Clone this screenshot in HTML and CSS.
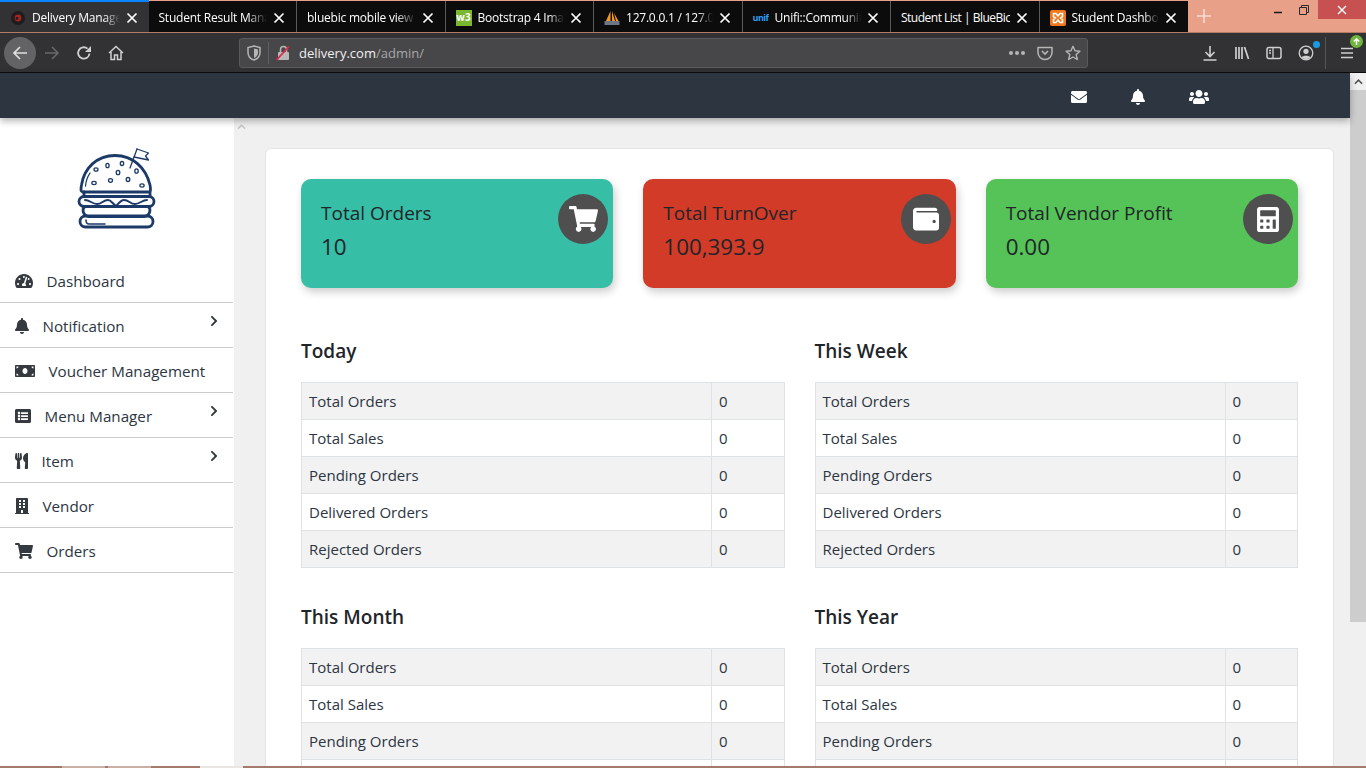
FILE: index.html
```html
<!DOCTYPE html>
<html lang="en">
<head>
<meta charset="utf-8">
<title>Delivery Management</title>
<link rel="stylesheet" href="styles.css">
</head>
<body>
<svg class="defs" aria-hidden="true">
  <symbol id="i-bell" viewBox="0 0 448 512"><path d="M224 512c35.32 0 63.97-28.65 63.97-64H160.03c0 35.35 28.65 64 63.97 64zm215.39-149.71c-19.32-20.76-55.47-51.99-55.47-154.29 0-77.7-54.48-139.9-127.94-155.16V32c0-17.67-14.32-32-31.98-32s-31.98 14.33-31.98 32v20.84C118.56 68.1 64.08 130.3 64.08 208c0 102.3-36.15 133.53-55.47 154.29-6 6.45-8.66 14.16-8.61 21.71.11 16.4 12.98 32 32.1 32h383.8c19.12 0 32-15.6 32.1-32 .05-7.55-2.61-15.27-8.61-21.71z"/></symbol>
  <symbol id="i-cart" viewBox="0 0 576 512"><path d="M528.12 301.319l47.273-208C578.806 78.301 567.391 64 551.99 64H159.208l-9.166-44.81C147.758 8.021 137.93 0 126.529 0H24C10.745 0 0 10.745 0 24v16c0 13.255 10.745 24 24 24h69.883l70.248 343.435C147.325 417.1 136 435.222 136 456c0 30.928 25.072 56 56 56s56-25.072 56-56c0-15.674-6.447-29.835-16.824-40h209.647C430.447 426.165 424 440.326 424 456c0 30.928 25.072 56 56 56s56-25.072 56-56c0-22.172-12.888-41.332-31.579-50.405l5.517-24.276c3.413-15.018-8.002-29.319-23.403-29.319H218.117l-6.545-32h293.145c11.206 0 20.92-7.754 23.403-18.681z"/></symbol>
  <symbol id="i-chev" viewBox="0 0 320 512"><path d="M285.476 272.971L91.132 467.314c-9.373 9.373-24.569 9.373-33.941 0l-22.667-22.667c-9.357-9.357-9.375-24.522-.04-33.901L188.505 256 34.484 101.255c-9.335-9.379-9.317-24.544.04-33.901l22.667-22.667c9.373-9.373 24.569-9.373 33.941 0L285.475 239.03c9.373 9.372 9.373 24.568.001 33.941z"/></symbol>
  <symbol id="i-env" viewBox="0 0 512 512"><path d="M502.3 190.8c3.9-3.1 9.7-.2 9.7 4.7V400c0 26.5-21.5 48-48 48H48c-26.5 0-48-21.5-48-48V195.6c0-5 5.7-7.8 9.7-4.7 22.4 17.4 52.1 39.5 154.1 113.6 21.1 15.4 56.7 47.8 92.2 47.6 35.7.3 72-32.8 92.3-47.6 102-74.1 131.6-96.3 154-113.7zM256 320c23.2.4 56.6-29.2 73.4-41.4 132.7-96.3 142.8-104.7 173.4-128.7 5.8-4.5 9.2-11.5 9.2-18.9v-19c0-26.5-21.5-48-48-48H48C21.5 64 0 85.5 0 112v19c0 7.4 3.4 14.3 9.2 18.9 30.6 23.9 40.7 32.4 173.4 128.7 16.8 12.2 50.2 41.8 73.4 41.4z"/></symbol>
  <symbol id="i-users" viewBox="0 0 640 512"><path d="M96 224c35.3 0 64-28.7 64-64s-28.7-64-64-64-64 28.7-64 64 28.7 64 64 64zm448 0c35.3 0 64-28.7 64-64s-28.7-64-64-64-64 28.7-64 64 28.7 64 64 64zm32 32h-64c-17.6 0-33.5 7.1-45.1 18.6 40.3 22.1 68.9 62 75.1 109.4h66c17.7 0 32-14.3 32-32v-32c0-35.3-28.7-64-64-64zm-256 0c61.9 0 112-50.1 112-112S381.9 32 320 32 208 82.1 208 144s50.1 112 112 112zm76.8 32h-8.3c-20.8 10-43.9 16-68.5 16s-47.6-6-68.5-16h-8.3C179.6 288 128 339.6 128 403.2V432c0 26.5 21.5 48 48 48h288c26.5 0 48-21.5 48-48v-28.8c0-63.6-51.6-115.2-115.2-115.2zm-223.7-13.4C161.5 263.1 145.6 256 128 256H64c-35.3 0-64 28.7-64 64v32c0 17.7 14.3 32 32 32h65.9c6.3-47.4 34.9-87.3 75.2-109.4z"/></symbol>
  <symbol id="i-wallet" viewBox="0 0 512 512"><path d="M461.2 128H80c-8.84 0-16-7.16-16-16s7.16-16 16-16h384c8.84 0 16-7.16 16-16 0-26.51-21.49-48-48-48H64C28.65 32 0 60.65 0 96v320c0 35.35 28.65 64 64 64h397.2c28.02 0 50.8-21.53 50.8-48V176c0-26.47-22.78-48-50.8-48zM416 336c-17.67 0-32-14.33-32-32s14.33-32 32-32 32 14.33 32 32-14.33 32-32 32z"/></symbol>
  <symbol id="i-calc" viewBox="0 0 448 512"><path d="M400 0H48C22.4 0 0 22.4 0 48v416c0 25.6 22.4 48 48 48h352c25.6 0 48-22.4 48-48V48c0-25.6-22.4-48-48-48zM128 435c0 6.4-6.4 12.8-12.8 12.8H76.8c-6.4 0-12.8-6.4-12.8-12.8v-38.4c0-6.4 6.4-12.8 12.8-12.8h38.4c6.4 0 12.8 6.4 12.8 12.8V435zm0-128c0 6.4-6.4 12.8-12.8 12.8H76.8c-6.4 0-12.8-6.4-12.8-12.8v-38.4c0-6.4 6.4-12.8 12.8-12.8h38.4c6.4 0 12.8 6.4 12.8 12.8V307zm128 128c0 6.4-6.4 12.8-12.8 12.8h-38.4c-6.4 0-12.8-6.4-12.8-12.8v-38.4c0-6.4 6.4-12.8 12.8-12.8h38.4c6.4 0 12.8 6.4 12.8 12.8V435zm0-128c0 6.4-6.4 12.8-12.8 12.8h-38.4c-6.4 0-12.8-6.4-12.8-12.8v-38.4c0-6.4 6.4-12.8 12.8-12.8h38.4c6.4 0 12.8 6.4 12.8 12.8V307zm128 128c0 6.4-6.4 12.8-12.8 12.8h-38.4c-6.4 0-12.8-6.4-12.8-12.8V268.8c0-6.4 6.4-12.8 12.8-12.8h38.4c6.4 0 12.8 6.4 12.8 12.8V435zm0-256c0 6.4-6.4 12.8-12.8 12.8H76.8c-6.4 0-12.8-6.4-12.8-12.8V76.8C64 70.4 70.4 64 76.8 64h294.4c6.4 0 12.8 6.4 12.8 12.8V179z"/></symbol>
  <symbol id="i-tach" viewBox="0 0 576 512"><path d="M288 32C128.94 32 0 160.94 0 320c0 52.8 14.25 102.26 39.06 144.8 5.61 9.62 16.3 15.2 27.44 15.2h443c11.14 0 21.83-5.58 27.44-15.2C561.75 422.26 576 372.8 576 320c0-159.06-128.94-288-288-288zm0 64c14.71 0 26.58 10.13 30.32 23.65-1.11 2.26-2.64 4.23-3.45 6.67l-9.22 27.67c-5.13 3.49-10.97 6.01-17.64 6.01-17.67 0-32-14.33-32-32S270.33 96 288 96zM96 384c-17.67 0-32-14.33-32-32s14.33-32 32-32 32 14.33 32 32-14.33 32-32 32zm48-160c-17.67 0-32-14.33-32-32s14.33-32 32-32 32 14.33 32 32-14.33 32-32 32zm246.77-72.41l-61.33 184C343.13 347.33 352 364.54 352 384c0 11.72-3.38 22.55-8.88 32H232.88c-5.5-9.45-8.88-20.28-8.88-32 0-33.94 26.5-61.43 59.9-63.59l61.34-184.01c4.17-12.56 17.73-19.45 30.36-15.17 12.57 4.19 19.35 17.79 15.17 30.36zm14.66 57.2l15.52-46.55c3.47-1.29 7.13-2.23 11.05-2.23 17.67 0 32 14.33 32 32s-14.33 32-32 32c-11.38-.01-20.89-6.28-26.57-15.22zM480 384c-17.67 0-32-14.33-32-32s14.33-32 32-32 32 14.33 32 32-14.33 32-32 32z"/></symbol>
  <symbol id="i-money" viewBox="0 0 640 512"><path d="M608 64H32C14.33 64 0 78.33 0 96v320c0 17.67 14.33 32 32 32h576c17.67 0 32-14.33 32-32V96c0-17.67-14.33-32-32-32zM48 400v-64c35.35 0 64 28.65 64 64H48zm0-224v-64h64c0 35.35-28.65 64-64 64zm272 176c-44.19 0-80-42.99-80-96 0-53.02 35.82-96 80-96s80 42.98 80 96c0 53.03-35.83 96-80 96zm272 48h-64c0-35.35 28.65-64 64-64v64zm0-224c-35.35 0-64-28.65-64-64h64v64z"/></symbol>
  <symbol id="i-list" viewBox="0 0 512 512"><path d="M464 480H48c-26.51 0-48-21.49-48-48V80c0-26.51 21.49-48 48-48h416c26.51 0 48 21.49 48 48v352c0 26.51-21.49 48-48 48zM128 120c-22.091 0-40 17.909-40 40s17.909 40 40 40 40-17.909 40-40-17.909-40-40-40zm0 96c-22.091 0-40 17.909-40 40s17.909 40 40 40 40-17.909 40-40-17.909-40-40-40zm0 96c-22.091 0-40 17.909-40 40s17.909 40 40 40 40-17.909 40-40-17.909-40-40-40zm288-136v-32c0-6.627-5.373-12-12-12H204c-6.627 0-12 5.373-12 12v32c0 6.627 5.373 12 12 12h200c6.627 0 12-5.373 12-12zm0 96v-32c0-6.627-5.373-12-12-12H204c-6.627 0-12 5.373-12 12v32c0 6.627 5.373 12 12 12h200c6.627 0 12-5.373 12-12zm0 96v-32c0-6.627-5.373-12-12-12H204c-6.627 0-12 5.373-12 12v32c0 6.627 5.373 12 12 12h200c6.627 0 12-5.373 12-12z"/></symbol>
  <symbol id="i-uten" viewBox="0 0 416 512"><path d="M207.9 15.2c.8 4.7 16.1 94.5 16.1 128.8 0 52.3-27.8 89.6-68.9 104.6L168 486.7c.7 13.7-10.2 25.3-24 25.3H80c-13.7 0-24.7-11.5-24-25.3l12.9-238.1C27.7 233.6 0 196.2 0 144 0 109.6 15.3 19.9 16.1 15.2 19.3-5.1 61.4-5.4 64 16.3v141.2c1.3 3.4 15.1 3.2 16 0 1.4-25.3 7.9-139.2 8-141.8 3.3-20.8 44.7-20.8 47.9 0 .2 2.7 6.6 116.5 8 141.8.9 3.2 14.8 3.4 16 0V16.3c2.6-21.6 44.8-21.4 48-1.1zm119.2 285.7l-15 185.1c-1.2 14 9.9 26 23.9 26h56c13.3 0 24-10.7 24-24V24c0-13.2-10.7-24-24-24-82.5 0-221.4 178.5-64.9 300.9z"/></symbol>
  <symbol id="i-bldg" viewBox="0 0 448 512"><path d="M436 480h-20V24c0-13.255-10.745-24-24-24H56C42.745 0 32 10.745 32 24v456H12c-6.627 0-12 5.373-12 12v20h448v-20c0-6.627-5.373-12-12-12zM128 76c0-6.627 5.373-12 12-12h40c6.627 0 12 5.373 12 12v40c0 6.627-5.373 12-12 12h-40c-6.627 0-12-5.373-12-12V76zm0 96c0-6.627 5.373-12 12-12h40c6.627 0 12 5.373 12 12v40c0 6.627-5.373 12-12 12h-40c-6.627 0-12-5.373-12-12v-40zm52 148h-40c-6.627 0-12-5.373-12-12v-40c0-6.627 5.373-12 12-12h40c6.627 0 12 5.373 12 12v40c0 6.627-5.373 12-12 12zm76 160h-64v-84c0-6.627 5.373-12 12-12h40c6.627 0 12 5.373 12 12v84zm64-172c0 6.627-5.373 12-12 12h-40c-6.627 0-12-5.373-12-12v-40c0-6.627 5.373-12 12-12h40c6.627 0 12 5.373 12 12v40zm0-96c0 6.627-5.373 12-12 12h-40c-6.627 0-12-5.373-12-12v-40c0-6.627 5.373-12 12-12h40c6.627 0 12 5.373 12 12v40zm0-96c0 6.627-5.373 12-12 12h-40c-6.627 0-12-5.373-12-12V76c0-6.627 5.373-12 12-12h40c6.627 0 12 5.373 12 12v40z"/></symbol>
  <symbol id="i-x" viewBox="0 0 12 12"><path d="M1.5 1.5l9 9M10.5 1.5l-9 9" fill="none" stroke="currentColor" stroke-width="1.7"/></symbol>
</svg>

<div class="tabstrip">
  <div class="tab active">
    <svg class="fav" viewBox="0 0 16 16"><circle cx="8" cy="8" r="7" fill="#1d1d1f"/><circle cx="8" cy="8" r="3.4" fill="#a3231f"/><circle cx="7" cy="8.4" r="1.3" fill="#1d1d1f"/></svg>
    <span class="tab-title">Delivery Management</span>
    <svg class="tab-x"><use href="#i-x"/></svg>
  </div>
  <div class="tab">
    <span class="tab-title">Student Result Management</span>
    <svg class="tab-x"><use href="#i-x"/></svg>
  </div>
  <div class="tab">
    <span class="tab-title">bluebic mobile view - Google</span>
    <svg class="tab-x"><use href="#i-x"/></svg>
  </div>
  <div class="tab">
    <span class="fav fav-w3">w3</span>
    <span class="tab-title">Bootstrap 4 Images</span>
    <svg class="tab-x"><use href="#i-x"/></svg>
  </div>
  <div class="tab">
    <svg class="fav" viewBox="0 0 16 16"><path d="M6.500 1L2 11h4.500zM8 1v10h3zM10 3l4.500 8H12z" fill="#f29a1f"/><rect x="0.500" y="11" width="15" height="4" fill="#6d7685"/></svg>
    <span class="tab-title">127.0.0.1 / 127.0.0.1</span>
    <svg class="tab-x"><use href="#i-x"/></svg>
  </div>
  <div class="tab">
    <span class="fav fav-uni">unif<b>i</b></span>
    <span class="tab-title">Unifi::Community</span>
    <svg class="tab-x"><use href="#i-x"/></svg>
  </div>
  <div class="tab">
    <span class="tab-title tab-full">Student List | BlueBic</span>
    <svg class="tab-x"><use href="#i-x"/></svg>
  </div>
  <div class="tab">
    <svg class="fav" viewBox="0 0 16 16"><rect width="16" height="16" rx="2" fill="#f2781f"/><path d="M3.500 3.500h2.500l2 2.500 2-2.500h2.500v3L10.500 8l2 1.500v3H10L8 10l-2 2.500H3.500v-3L5.500 8l-2-1.500z" fill="none" stroke="#fff" stroke-width="1.500"/></svg>
    <span class="tab-title">Student Dashboard</span>
    <svg class="tab-x"><use href="#i-x"/></svg>
  </div>
  <div class="new-tab">
    <svg viewBox="0 0 14 14"><path d="M7 0v14M0 7h14" stroke="#f6dcd2" stroke-width="1.600"/></svg>
  </div>
  <div class="winctl">
    <span class="win-btn"><svg viewBox="0 0 10 10"><path d="M1 7.500h8" stroke="#1b1b1b" stroke-width="1.500"/></svg></span>
    <span class="win-btn"><svg viewBox="0 0 10 10"><path d="M.5 2.500h7v7h-7zM2.500 2.500v-2h7v7h-2" fill="none" stroke="#2a2a2a"/></svg></span>
    <span class="win-close"><svg viewBox="0 0 10 10"><path d="M1 1l8 8M9 1l-8 8" stroke="#fff" stroke-width="1.400"/></svg></span>
  </div>
</div>

<div class="toolbar">
  <div class="nav-btn back"><svg viewBox="0 0 16 16"><path d="M15 8H2M8 2L2 8l6 6" fill="none" stroke="#e0e0e0" stroke-width="1.700"/></svg></div>
  <div class="nav-btn"><svg viewBox="0 0 16 16"><path d="M1 8h13M8 2l6 6-6 6" fill="none" stroke="#69696b" stroke-width="1.500"/></svg></div>
  <div class="nav-btn"><svg viewBox="0 0 16 16"><path d="M13.500 8.500A5.700 5.700 0 1 1 11.500 3.600" fill="none" stroke="#d0d0d0" stroke-width="1.800"/><path d="M15 1v6H9z" fill="#d0d0d0"/></svg></div>
  <div class="nav-btn"><svg viewBox="0 0 16 16"><path d="M1 8l7-6.500L15 8M3 7v7.500h3.500V10h3v4.500H13V7" fill="none" stroke="#d0d0d0" stroke-width="1.500"/></svg></div>
  <div class="urlbar">
    <svg class="url-ic shield" viewBox="0 0 16 16"><path d="M8 1l6 1.500v5c0 4-3 6.500-6 7.500-3-1-6-3.500-6-7.500v-5z" fill="none" stroke="#b5b5b5" stroke-width="1.500"/><path d="M8 3.500v9.500c2-1 4-2.500 4-5.500V4.500z" fill="#b5b5b5"/></svg>
    <span class="url-sep"></span>
    <svg class="url-ic lock" viewBox="0 0 16 16"><rect x="3" y="7" width="11" height="8" rx="1" fill="#b8b8b8"/><path d="M5.500 7V4.500a3 3 0 0 1 6 0V7" fill="none" stroke="#b8b8b8" stroke-width="1.500"/><path d="M1.500 15L14 1.500" stroke="#e0264a" stroke-width="1.800"/></svg>
    <span class="url-text">delivery.com<span class="url-path">/admin/</span></span>
    <span class="url-dots"><i></i><i></i><i></i></span>
    <svg class="url-ic pocket" viewBox="0 0 16 16"><path d="M1 2.500h14v5a7 7 0 0 1-14 0z" fill="none" stroke="#b5b5b5" stroke-width="1.500" stroke-linejoin="round"/><path d="M5 6l3 3 3-3" fill="none" stroke="#b5b5b5" stroke-width="1.600"/></svg>
    <svg class="url-ic star" viewBox="0 0 16 16"><path d="M8 1.300l2 4.500 4.900.5-3.700 3.300 1.100 4.900L8 12l-4.300 2.500 1.100-4.900L1.100 6.300 6 5.800z" fill="none" stroke="#b5b5b5" stroke-width="1.400" stroke-linejoin="round"/></svg>
  </div>
  <div class="tools">
    <svg class="tool" viewBox="0 0 16 16"><path d="M8 1v10M3.500 7L8 11.500 12.500 7M1.500 15h13" fill="none" stroke="#cfcfcf" stroke-width="1.600"/></svg>
    <svg class="tool" viewBox="0 0 16 16"><path d="M2 2v12M5 2v12M8 2v12M10.500 2l4 12" fill="none" stroke="#cfcfcf" stroke-width="1.700"/></svg>
    <svg class="tool" viewBox="0 0 16 16"><rect x="1" y="2.500" width="14" height="11" rx="2" fill="none" stroke="#cfcfcf" stroke-width="1.500"/><path d="M7 2.500v11M3 5.500h2M3 8h2" stroke="#cfcfcf" stroke-width="1.300"/></svg>
    <span class="acct">
      <svg class="tool" viewBox="0 0 16 16"><circle cx="8" cy="8" r="6.800" fill="none" stroke="#cfcfcf" stroke-width="1.300"/><circle cx="8" cy="6.300" r="2.600" fill="#cfcfcf"/><path d="M3.500 12.500c1-2.500 8-2.500 9 0L8 14.500z" fill="#cfcfcf"/></svg>
      <span class="acct-dot"></span>
    </span>
    <span class="tool-sep"></span>
    <span class="menu">
      <svg class="tool" viewBox="0 0 16 16"><path d="M2 3.500h12M2 8h12M2 12.500h12" stroke="#cfcfcf" stroke-width="1.500"/></svg>
      <span class="menu-badge"><svg viewBox="0 0 10 10"><path d="M5 9V2M2 5l3-3 3 3" fill="none" stroke="#fff" stroke-width="1.700"/></svg></span>
    </span>
  </div>
</div>

<div class="viewport">
  <div class="page">
    <header class="topnav">
      <svg class="nav-ic env"><use href="#i-env"/></svg>
      <svg class="nav-ic bell"><use href="#i-bell"/></svg>
      <svg class="nav-ic users"><use href="#i-users"/></svg>
    </header>
    <div class="body-row">
      <aside class="sidebar">
        <div class="logo">
          <svg class="burger" viewBox="0 0 82 84">
            <g fill="none" stroke="#1c3a68" stroke-width="2.800" stroke-linecap="round" stroke-linejoin="round">
              <path d="M5 44c0-2 0-3 .5-5C8 22 21 9.500 39 9.500S70 22 74 39c.500 2 .500 3 .500 5 0 1-1 2-2 2H7c-1 0-2-1-2-2z"/>
              <path d="M8 46v4M74 46v4"/>
              <rect x="3" y="50.500" width="75" height="10" rx="5"/>
              <path d="M9 60.500c-3 2-3 9 4 10h55c7-1 7-8 4-10"/>
              <rect x="4" y="70" width="73" height="11" rx="5.500"/>
              <path d="M9 54c5 0 7 4 12 4s6-4 11-4c3 0 4 3 8 6 3-3 5-6 8-6 5 0 6 4 11 4s7-4 12-4" stroke-width="2"/>
            </g>
            <g fill="none" stroke="#1c3a68" stroke-width="1.300" stroke-linecap="round" stroke-linejoin="round">
              <path d="M54 22L61 3"/>
              <path d="M61 3l11.500 4-3 3 3 4L58 11"/>
              <path d="M9.500 40c.500-6 2.500-10 4.500-13"/>
              <path d="M10 74c0 3 1 4 3 4h16" stroke-width="1.600"/>
              <ellipse cx="20" cy="23.500" rx="2" ry="1.700"/>
              <ellipse cx="31.500" cy="19.500" rx="1.600" ry="2.200"/>
              <ellipse cx="46" cy="17.500" rx="1.700" ry="2"/>
              <ellipse cx="42" cy="26.500" rx="1.800" ry="2.200"/>
              <ellipse cx="60.500" cy="25" rx="1.700" ry="2.200"/>
              <ellipse cx="18" cy="37" rx="2.200" ry="1.600"/>
              <ellipse cx="34.500" cy="34.500" rx="2" ry="1.800"/>
              <ellipse cx="52" cy="33.500" rx="1.800" ry="2"/>
              <ellipse cx="66" cy="39.500" rx="2.100" ry="1.600"/>
            </g>
          </svg>
        </div>
        <nav class="side-nav">
          <a class="side-item"><svg class="si si-18"><use href="#i-tach"/></svg><span>Dashboard</span></a>
          <a class="side-item"><svg class="si si-14"><use href="#i-bell"/></svg><span>Notification</span><svg class="chev"><use href="#i-chev"/></svg></a>
          <a class="side-item"><svg class="si si-20"><use href="#i-money"/></svg><span>Voucher Management</span></a>
          <a class="side-item"><svg class="si si-16"><use href="#i-list"/></svg><span>Menu Manager</span><svg class="chev"><use href="#i-chev"/></svg></a>
          <a class="side-item"><svg class="si si-13"><use href="#i-uten"/></svg><span>Item</span><svg class="chev"><use href="#i-chev"/></svg></a>
          <a class="side-item"><svg class="si si-14"><use href="#i-bldg"/></svg><span>Vendor</span></a>
          <a class="side-item"><svg class="si si-18"><use href="#i-cart"/></svg><span>Orders</span></a>
        </nav>
      </aside>
      <main class="main">
        <div class="main-arrow"><svg viewBox="0 0 10 6"><path d="M1 5l4-4 4 4" fill="none" stroke="#c4c4c4" stroke-width="1.600"/></svg></div>
        <div class="panel">
          <div class="stats">
            <div class="stat teal">
              <div class="stat-label">Total Orders</div>
              <div class="stat-value">10</div>
              <span class="stat-ic"><svg class="ic-cart"><use href="#i-cart"/></svg></span>
            </div>
            <div class="stat red">
              <div class="stat-label">Total TurnOver</div>
              <div class="stat-value">100,393.9</div>
              <span class="stat-ic"><svg class="ic-wallet"><use href="#i-wallet"/></svg></span>
            </div>
            <div class="stat green">
              <div class="stat-label">Total Vendor Profit</div>
              <div class="stat-value">0.00</div>
              <span class="stat-ic"><svg class="ic-calc"><use href="#i-calc"/></svg></span>
            </div>
          </div>
          <div class="reports">
            <section class="report">
              <h2>Today</h2>
              <table>
                <tr><td>Total Orders</td><td>0</td></tr>
                <tr><td>Total Sales</td><td>0</td></tr>
                <tr><td>Pending Orders</td><td>0</td></tr>
                <tr><td>Delivered Orders</td><td>0</td></tr>
                <tr><td>Rejected Orders</td><td>0</td></tr>
              </table>
            </section>
            <section class="report">
              <h2>This Week</h2>
              <table>
                <tr><td>Total Orders</td><td>0</td></tr>
                <tr><td>Total Sales</td><td>0</td></tr>
                <tr><td>Pending Orders</td><td>0</td></tr>
                <tr><td>Delivered Orders</td><td>0</td></tr>
                <tr><td>Rejected Orders</td><td>0</td></tr>
              </table>
            </section>
            <section class="report">
              <h2>This Month</h2>
              <table>
                <tr><td>Total Orders</td><td>0</td></tr>
                <tr><td>Total Sales</td><td>0</td></tr>
                <tr><td>Pending Orders</td><td>0</td></tr>
                <tr><td>Delivered Orders</td><td>0</td></tr>
                <tr><td>Rejected Orders</td><td>0</td></tr>
              </table>
            </section>
            <section class="report">
              <h2>This Year</h2>
              <table>
                <tr><td>Total Orders</td><td>0</td></tr>
                <tr><td>Total Sales</td><td>0</td></tr>
                <tr><td>Pending Orders</td><td>0</td></tr>
                <tr><td>Delivered Orders</td><td>0</td></tr>
                <tr><td>Rejected Orders</td><td>0</td></tr>
              </table>
            </section>
          </div>
        </div>
      </main>
    </div>
  </div>
  <div class="vscroll">
    <div class="vs-btn"><svg viewBox="0 0 10 6"><path d="M1 5l4-4 4 4" fill="none" stroke="#505050" stroke-width="1.700"/></svg></div>
    <div class="vs-thumb"></div>
  </div>
</div>

<div class="taskbar">
  <span class="task t1"></span><span class="task t2"></span><span class="task t3"></span>
</div>
</body>
</html>
```
FILE: styles.css
```css
* { box-sizing: border-box; }
html, body { margin: 0; padding: 0; }
body {
  width: 1366px;
  height: 768px;
  overflow: hidden;
  display: flex;
  flex-direction: column;
  font-family: "Open Sans", "Noto Sans", sans-serif;
  color: #212529;
  background: #fff;
}
.defs { display: none; }

/* tab strip */
.tabstrip {
  height: 33px;
  flex: none;
  display: flex;
  background: #e8a088;
  border-bottom: 1px solid #b77a66;
  position: relative;
}
.tab {
  width: 148.5px;
  flex: none;
  margin-top: 1px;
  display: flex;
  align-items: center;
  padding: 2px 11px 0 10px;
  background: #0c0c0d;
  color: #fff;
  font-size: 12px;
  letter-spacing: -0.22px;
  border-right: 1px solid #5a5a5c;
}
.tab:nth-child(8) { border-right: 0; }
.tab.active {
  margin-top: 0;
  background: #323234;
  border-top: 2px solid #0a84ff;
  border-right: 0;
  padding-top: 1px;
}
.fav {
  width: 16px;
  height: 16px;
  flex: none;
  margin-right: 6px;
  letter-spacing: 0;
}
.fav-w3 {
  background: #7cb82f;
  color: #fff;
  font-size: 10px;
  font-weight: 700;
  line-height: 15px;
  text-align: center;
}
.fav-uni {
  color: #2a9df0;
  font-size: 9px;
  font-weight: 700;
  line-height: 16px;
  white-space: nowrap;
  letter-spacing: -0.5px;
  overflow: hidden;
}
.fav-uni b { color: #f2781f; }
.tab-title {
  flex: 1;
  min-width: 0;
  overflow: hidden;
  white-space: nowrap;
  -webkit-mask-image: linear-gradient(to right, #000 82%, transparent 100%);
  mask-image: linear-gradient(to right, #000 82%, transparent 100%);
}
.tab-title.tab-full {
  letter-spacing: -0.5px;
  -webkit-mask-image: none;
  mask-image: none;
}
.tab-x {
  width: 12px;
  height: 12px;
  flex: none;
  margin-left: 6px;
  color: #fff;
}
.new-tab {
  width: 32px;
  display: flex;
  align-items: center;
  justify-content: center;
}
.new-tab svg { width: 14px; height: 14px; }
.winctl {
  margin-left: auto;
  display: flex;
  align-items: flex-start;
  gap: 2px;
  height: 19px;
}
.win-btn {
  width: 24px;
  height: 19px;
  display: flex;
  align-items: center;
  justify-content: center;
}
.win-btn svg { width: 10px; height: 10px; }
.win-close {
  width: 48px;
  height: 19px;
  background: #c75050;
  display: flex;
  align-items: center;
  justify-content: center;
}
.win-close svg { width: 10px; height: 10px; }

/* toolbar */
.toolbar {
  height: 40px;
  flex: none;
  display: flex;
  align-items: center;
  background: #323234;
  border-bottom: 1px solid #0c0c0d;
  padding: 1px 0 0 4px;
}
.nav-btn {
  width: 32px;
  height: 32px;
  flex: none;
  display: flex;
  align-items: center;
  justify-content: center;
  border-radius: 50%;
}
.nav-btn svg { width: 16px; height: 16px; }
.nav-btn.back { background: #636365; }
.urlbar {
  margin-left: 107px;
  width: 849px;
  height: 30px;
  flex: none;
  display: flex;
  align-items: center;
  background: #474749;
  border: 1px solid #5a5a5c;
  border-radius: 3px;
  padding: 0 6px;
  font-size: 13px;
}
.url-ic { width: 16px; height: 16px; flex: none; }
.url-sep {
  width: 1px;
  height: 22px;
  background: #5f5f61;
  margin: 0 6px;
}
.url-text {
  margin-left: 8px;
  color: #f0f0f0;
  flex: 1;
}
.url-path { color: #a8a8a8; }
.url-dots {
  display: flex;
  gap: 2px;
  margin-right: 12px;
}
.url-dots i {
  width: 4px;
  height: 4px;
  border-radius: 50%;
  background: #b5b5b5;
}
.pocket { margin-right: 12px; }
.tools {
  flex: 1;
  display: flex;
  align-items: center;
  padding-left: 114px;
  gap: 16px;
}
.tool { width: 16px; height: 16px; flex: none; display: block; }
.acct, .menu { position: relative; display: block; }
.acct-dot {
  position: absolute;
  top: -4px;
  right: -6px;
  width: 7px;
  height: 7px;
  background: #1a9be0;
  border-radius: 50%;
}
.tool-sep {
  width: 1px;
  height: 32px;
  background: #555557;
  margin: 0 4px 0 -5px;
}
.menu { margin-left: -7px; }
.menu-badge {
  position: absolute;
  top: -10px;
  right: -8px;
  width: 13px;
  height: 13px;
  border-radius: 50%;
  background: #6fb63c;
  display: flex;
  align-items: center;
  justify-content: center;
}
.menu-badge svg { width: 9px; height: 9px; }

/* page viewport */
.viewport {
  flex: 1;
  min-height: 0;
  display: flex;
}
.page {
  flex: 1;
  min-width: 0;
  display: flex;
  flex-direction: column;
}
.topnav {
  height: 45px;
  flex: none;
  background: #2d3540;
  display: flex;
  align-items: center;
  padding: 2px 0 0 1071px;
  box-shadow: 0 3px 7px rgba(0, 0, 0, 0.3);
  position: relative;
  z-index: 2;
}
.nav-ic { fill: #fff; height: 16px; flex: none; }
.nav-ic.env { width: 16px; }
.nav-ic.bell { width: 14px; margin-left: 44px; }
.nav-ic.users { width: 20px; margin-left: 44px; }

.body-row {
  flex: 1;
  min-height: 0;
  display: flex;
}
.sidebar {
  width: 234px;
  flex: none;
  background: #fff;
  padding-right: 1px;
}
.logo {
  height: 140px;
  padding-top: 28px;
  display: flex;
  justify-content: center;
}
.burger { width: 82px; height: 84px; }
.side-item {
  height: 45px;
  display: flex;
  align-items: center;
  padding: 2px 14px 0 15px;
  border-bottom: 1px solid #ccc;
  gap: 13.5px;
  font-size: 15.2px;
  color: #2c3542;
}
.si { height: 16px; flex: none; fill: #343a40; }
.si-13 { width: 13px; }
.si-14 { width: 14px; }
.si-16 { width: 16px; }
.si-18 { width: 18px; }
.si-20 { width: 20px; }
.chev {
  width: 10px;
  height: 12px;
  margin-left: auto;
  margin-bottom: 10px;
  fill: #343a40;
}
.main {
  flex: 1;
  min-width: 0;
  background: #f0f0f0;
  overflow: hidden;
  padding: 0 16px 0 31px;
}
.main-arrow {
  height: 30px;
  margin-left: -28px;
  padding-top: 6px;
}
.main-arrow svg { width: 9px; height: 6px; display: block; }
.panel {
  background: #fff;
  border: 1px solid #e4e4e4;
  border-radius: 6px 6px 0 0;
  padding: 30px 35px 0;
}
.stats {
  display: grid;
  grid-template-columns: repeat(3, 1fr);
  gap: 30px;
}
.stat {
  position: relative;
  height: 109px;
  border-radius: 10px;
  padding: 20px 20px 0;
  box-shadow: 2px 4px 8px rgba(0, 0, 0, 0.2);
  color: #212529;
}
.teal { background: #36bea6; }
.red { background: #d13b27; }
.green { background: #55c357; }
.stat-label { font-size: 19px; line-height: 28px; }
.stat-value { font-size: 22.4px; line-height: 34px; margin-top: 3px; }
.stat-ic {
  position: absolute;
  top: 15px;
  right: 5px;
  width: 50px;
  height: 50px;
  border-radius: 50%;
  background: #4f4f4f;
  display: flex;
  align-items: center;
  justify-content: center;
  fill: #fff;
}
.ic-cart { width: 29px; height: 26px; }
.ic-wallet { width: 26px; height: 26px; }
.ic-calc { width: 22px; height: 25px; }

.reports {
  display: grid;
  grid-template-columns: 1fr 1fr;
  column-gap: 30px;
}
.report:nth-child(-n+2) { padding-top: 46px; }
.report:nth-child(n+3) { padding-top: 32px; }
.report h2 {
  margin: 0 0 14px;
  font-size: 19px;
  font-weight: 600;
  line-height: 34px;
  color: #212529;
}
table {
  width: 100%;
  border-collapse: collapse;
  font-size: 15px;
}
td {
  border: 1px solid #dee2e6;
  height: 37px;
  padding: 0 7px;
  line-height: 20px;
  color: #2c3542;
}
td:last-child { width: 72.5px; }
tr:nth-child(odd) td { background: #f2f2f2; }

/* window scrollbar */
.vscroll {
  width: 16px;
  flex: none;
  background: #f0f0f0;
}
.vs-btn {
  height: 17px;
  display: flex;
  align-items: center;
  justify-content: center;
}
.vs-btn svg { width: 9px; height: 6px; }
.vs-thumb {
  height: 532px;
  background: #cdcdcd;
}

.taskbar {
  height: 2px;
  flex: none;
  display: flex;
  background: #a47a6c;
  position: relative;
  z-index: 3;
}
.task { width: 43px; background: #c9b0a6; }
.t1 { margin-left: 62px; }
.t2 { margin-left: 3px; }
.t3 { margin-left: 49px; background: #ece6e3; }
```
